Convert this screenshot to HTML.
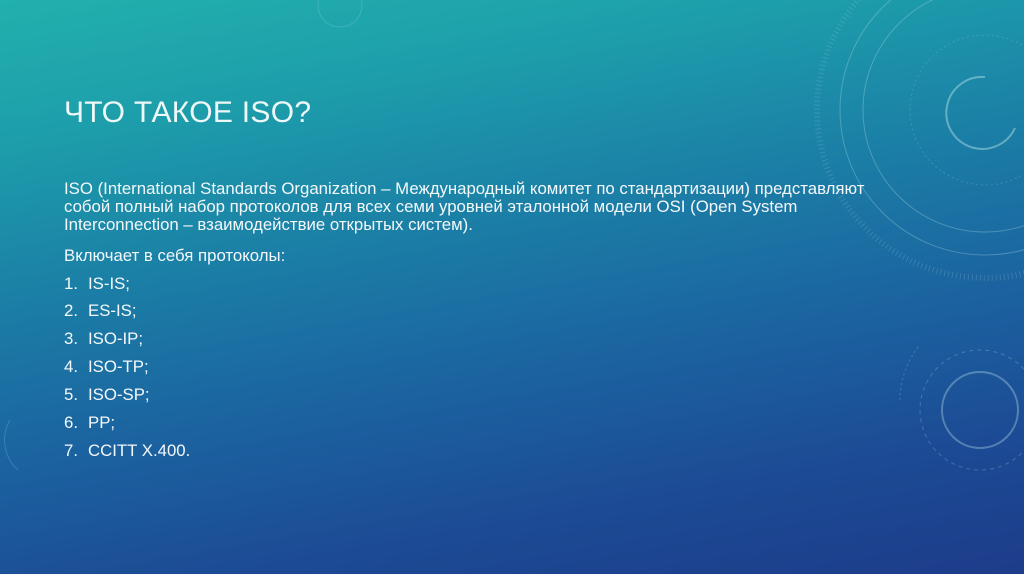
<!DOCTYPE html>
<html><head><meta charset="utf-8"><style>
html,body{margin:0;padding:0}
body{width:1024px;height:574px;overflow:hidden;position:relative;font-family:"Liberation Sans",sans-serif;color:#fff;
background:linear-gradient(170deg,#22b0ac 0%,#1d9fab 18%,#1b7fa6 40%,#1b62a0 62%,#1c4a94 82%,#1d3c8a 100%);}
.t{position:absolute;left:64px;top:96px;font-size:30px;letter-spacing:0.3px;color:#eef8f8}
.b{position:absolute;left:64px;font-size:16.8px;white-space:nowrap;color:#f4f8fa}
.b i{font-style:normal;display:inline-block;width:24px}
svg{position:absolute;left:0;top:0}
</style></head><body>
<svg width="1024" height="574" fill="none" stroke="#bfe6ea" stroke-opacity="0.3">
<circle cx="985" cy="110" r="145" stroke-width="1"/>
<circle cx="985" cy="110" r="122" stroke-width="1"/>
<circle cx="985" cy="110" r="168" stroke-width="6" stroke-dasharray="1 3" stroke-opacity="0.18"/>
<circle cx="985" cy="110" r="75" stroke-dasharray="2 3" stroke-opacity="0.2"/>
<path d="M985 77 A36 36 0 1 0 1015 128" stroke-width="2" stroke-opacity="0.45"/>
<circle cx="980" cy="410" r="38" stroke-width="2" stroke-opacity="0.35"/>
<circle cx="980" cy="410" r="60" stroke-dasharray="4 4" stroke-opacity="0.25"/>
<path d="M900 400 A85 85 0 0 1 920 345" stroke-dasharray="2 3" stroke-opacity="0.25"/>
<circle cx="340" cy="5" r="22" stroke-opacity="0.2"/>
<path d="M18 470 A40 40 0 0 1 10 420" stroke-opacity="0.2"/>
</svg>
<div class="t">ЧТО ТАКОЕ ISO?</div>
<div class="b" style="top:180px;line-height:18px">ISO (International Standards Organization – Международный комитет по стандартизации) представляют<br>собой полный набор протоколов для всех семи уровней эталонной модели OSI (Open System<br>Interconnection – взаимодействие открытых систем).</div>
<div class="b" style="top:246px">Включает в себя протоколы:</div>
<div class="b" style="top:274px"><i>1.</i>IS-IS;</div>
<div class="b" style="top:301px"><i>2.</i>ES-IS;</div>
<div class="b" style="top:329px"><i>3.</i>ISO-IP;</div>
<div class="b" style="top:357px"><i>4.</i>ISO-TP;</div>
<div class="b" style="top:385px"><i>5.</i>ISO-SP;</div>
<div class="b" style="top:413px"><i>6.</i>PP;</div>
<div class="b" style="top:441px"><i>7.</i>CCITT X.400.</div>
</body></html>
